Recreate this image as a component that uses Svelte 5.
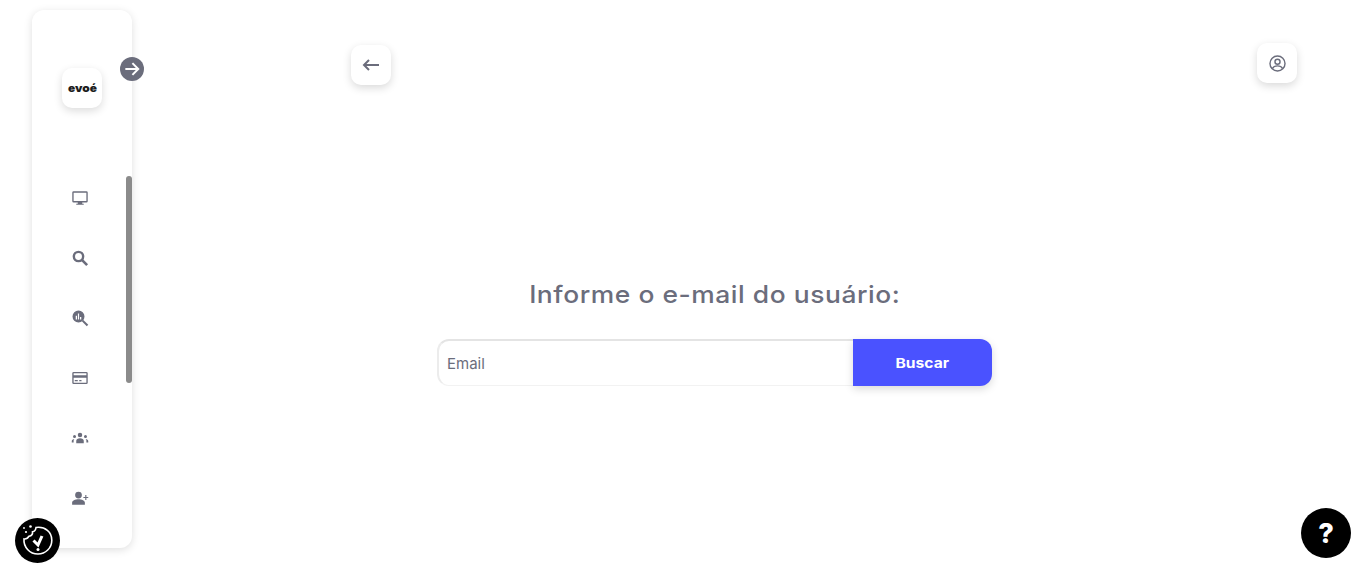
<script>
  const navItems = ["monitor", "search", "insights", "card", "groups", "addUser"];
  let email = $state("");
</script>

<div class="page">
  <aside class="sidebar">
    <div class="logo"><span>evoé</span></div>
    <button class="toggle" aria-label="Expandir menu">
      <svg viewBox="0 0 24 24" width="20" height="20" fill="none" stroke="#fff" stroke-width="2.400">
        <path d="M4 12h15M12.500 5l7 7-7 7" />
      </svg>
    </button>
    <nav class="nav">
      {#each navItems as item}
        <a href="#{item}" class="nav-item" aria-label={item}>
          <svg viewBox="0 0 24 24" width="18" height="18" fill="#6b6d7c">
            {#if item === "monitor"}
              <path d="M20.500 3h-17A1.800 1.800 0 0 0 1.700 4.800v11.400A1.800 1.800 0 0 0 3.500 18H9v1.600H7V21h10v-1.400h-2V18h5.500a1.800 1.800 0 0 0 1.800-1.800V4.800A1.800 1.800 0 0 0 20.500 3zm0 13h-17V5h17z" />
            {:else if item === "search"}
              <circle cx="10" cy="10" r="6.200" fill="none" stroke="#6b6d7c" stroke-width="3.200" />
              <path d="M14.500 14.500l7 7" stroke="#6b6d7c" stroke-width="3.600" />
            {:else if item === "insights"}
              <path fill-rule="evenodd" d="M10 2a8 8 0 1 0 0 16 8 8 0 0 0 0-16zM6.300 9H8v5H6.300zM9.200 6h1.600v8H9.200zM12 10.500h1.700V14H12z" />
              <path d="M15.500 15.500l6.500 6.500" stroke="#6b6d7c" stroke-width="2.800" />
            {:else if item === "card"}
              <path d="M20.500 4h-17A1.800 1.800 0 0 0 1.700 5.800v12.400A1.800 1.800 0 0 0 3.500 20h17a1.800 1.800 0 0 0 1.800-1.800V5.800A1.800 1.800 0 0 0 20.500 4zm0 14.300h-17V11.500h17zm0-10h-17V5.700h17zM5 14.800h4v1.400H5zm6 0h3v1.400h-3z" />
            {:else if item === "groups"}
              <path d="M12 5a3 3 0 1 1 0 6 3 3 0 0 1 0-6zM7 19v-3.500c0-2 2.200-3.300 5-3.300s5 1.300 5 3.300V19zM4.700 8a2 2 0 1 1 0 4 2 2 0 0 1 0-4zm14.600 0a2 2 0 1 1 0 4 2 2 0 0 1 0-4zM1 18v-1.800c0-1.600 1.500-2.700 3.500-2.800-.7.600-1 1.300-1 2.200V18zm22 0h-2.500v-2.400c0-.9-.3-1.600-1-2.200 2 .1 3.500 1.200 3.500 2.800z" />
            {:else}
              <path d="M10 3.500a4.500 4.500 0 1 1 0 9A4.500 4.500 0 0 1 10 3.500zM1.500 21v-3c0-2.800 3.900-4.500 8.500-4.500s8.500 1.700 8.500 4.500v3zM19 8h1.500v2.500H23V12h-2.500v2.500H19V12h-2.500v-1.500H19z" />
            {/if}
          </svg>
        </a>
      {/each}
    </nav>
    <div class="scrollbar"></div>
  </aside>

  <main class="content">
    <div class="topbar">
      <button class="square back" aria-label="Voltar">
        <svg viewBox="0 0 24 24" width="24" height="24" fill="none" stroke="#6b6d7c" stroke-width="2">
          <path d="M20 12H5M10 7l-5 5 5 5" />
        </svg>
      </button>
      <button class="square profile" aria-label="Perfil">
        <svg viewBox="0 0 24 24" width="19" height="19" fill="none" stroke="#6b6d7c" stroke-width="1.800">
          <circle cx="12" cy="12" r="9.500" />
          <circle cx="12" cy="9.800" r="3.200" />
          <path d="M5.500 18.500c1.200-2.400 3.800-3.500 6.500-3.500s5.300 1.100 6.500 3.500" />
        </svg>
      </button>
    </div>

    <section class="search">
      <h2>Informe o e-mail do usuário:</h2>
      <form class="field" onsubmit={(e) => e.preventDefault()}>
        <input type="text" placeholder="Email" bind:value={email} />
        <button type="submit"><span>Buscar</span></button>
      </form>
    </section>
  </main>

  <button class="float cookie" aria-label="Cookies">
    <svg viewBox="0 0 45 45" width="45" height="45" fill="none" stroke="#fff" stroke-width="1.600">
      <path d="M21 9.500c-.3 2.500-1.800 4-3.500 4.300.3 2.200-1.200 4-3.500 4.400-1.200 2.200-3 3-5 2.800-.6 7.800 5.500 15 14 15 7.500 0 13.800-6 13.800-13.800 0-8-6.500-14-15.800-12.700z" />
      <path d="M18.500 22.500l4.500 4.500 4-9" stroke-width="3" />
      <circle cx="23" cy="31.500" r="1.500" fill="#fff" stroke="none" />
      <circle cx="15.500" cy="8.500" r="1.300" fill="#fff" stroke="none" />
      <circle cx="11" cy="14" r="1.100" fill="#fff" stroke="none" />
      <circle cx="9" cy="10" r="0.900" fill="#fff" stroke="none" />
    </svg>
  </button>
  <button class="float help">?</button>
</div>

<style>
  :global(body) {
    background: #fff;
    overflow: hidden;
  }

  .page {
    display: flex;
    height: 566px;
    box-sizing: border-box;
    padding: 10px 0 18px 32px;
    font-family: "Inter", "Liberation Sans", sans-serif;
  }

  button {
    border: none;
    padding: 0;
    cursor: pointer;
    font-family: inherit;
  }

  .sidebar {
    position: relative;
    flex: 0 0 100px;
    display: flex;
    flex-direction: column;
    align-items: center;
    border-radius: 12px;
    background: #fff;
    box-shadow: 0 2px 8px rgba(0, 0, 0, 0.13);
  }

  .logo {
    display: flex;
    align-items: center;
    justify-content: center;
    width: 40px;
    height: 40px;
    margin-top: 58px;
    border-radius: 10px;
    background: #fff;
    box-shadow: 0 3px 8px rgba(0, 0, 0, 0.14);
    font-size: 11px;
    font-weight: 900;
    color: #1c1c1c;
  }

  .logo span {
    display: inline-block;
    transform: scaleX(1.08);
  }

  .toggle {
    position: absolute;
    top: 47px;
    left: 88px;
    display: flex;
    align-items: center;
    justify-content: center;
    width: 24px;
    height: 24px;
    border-radius: 50%;
    background: #6b6d7c;
  }

  .nav {
    display: flex;
    flex-direction: column;
    align-items: center;
    gap: 40px;
    margin-top: 80px;
    margin-right: 5px;
  }

  .nav-item {
    display: flex;
    align-items: center;
    justify-content: center;
    width: 20px;
    height: 20px;
  }

  .scrollbar {
    position: absolute;
    top: 166px;
    right: 0;
    width: 6px;
    height: 207px;
    border-radius: 3px;
    background: #8b8b8b;
  }

  .content {
    flex: 1;
    display: flex;
    flex-direction: column;
  }

  .topbar {
    display: flex;
    justify-content: space-between;
    padding: 33px 61px 0 219px;
  }

  .square {
    display: flex;
    align-items: center;
    justify-content: center;
    width: 40px;
    height: 40px;
    border-radius: 10px;
    background: #fff;
    box-shadow: 0 3px 8px rgba(0, 0, 0, 0.15);
  }

  .back {
    margin-top: 2px;
  }

  .search {
    display: flex;
    flex-direction: column;
    align-items: center;
    margin-top: 192px;
    padding-right: 61px;
  }

  h2 {
    margin: 0 0 26px;
    font-size: 24px;
    line-height: 36px;
    font-weight: 500;
    letter-spacing: 0.5px;
    color: #6b6d7c;
    transform: scaleX(1.1);
  }

  .field {
    display: flex;
    width: 555px;
    height: 47px;
  }

  input {
    flex: 1;
    min-width: 0;
    box-sizing: border-box;
    padding: 0 8px;
    border: 1px solid #f2f2f2;
    border-top: 2px solid #e4e4e4;
    border-left: 2px solid #ececec;
    border-right: none;
    border-radius: 12px 0 0 12px;
    outline: none;
    font-family: "Inter", sans-serif;
    font-size: 15px;
    color: #6b6d7c;
  }

  input::placeholder {
    color: #6b6d7c;
    opacity: 1;
  }

  .field button {
    flex: 0 0 139px;
    border-radius: 0 12px 12px 0;
    background: #4a52ff;
    box-shadow: 0 3px 8px rgba(0, 0, 0, 0.15);
    color: #fff;
    font-size: 13px;
    font-weight: 700;
  }

  .field button span {
    display: inline-block;
    transform: scaleX(1.2);
  }

  .float {
    position: fixed;
    display: flex;
    align-items: center;
    justify-content: center;
    border-radius: 50%;
    background: #000;
  }

  .cookie {
    left: 15px;
    top: 518px;
    width: 45px;
    height: 45px;
  }

  .help {
    left: 1301px;
    top: 508px;
    width: 50px;
    height: 50px;
    color: #fff;
    font-size: 27px;
    font-weight: 800;
  }
</style>
